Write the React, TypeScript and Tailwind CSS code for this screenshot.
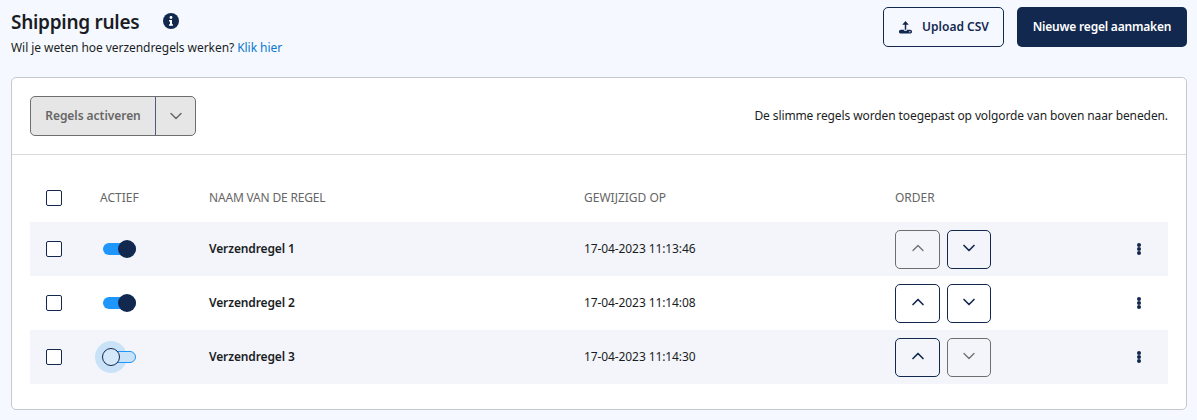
import React from 'react';
import { ChevronDown, ChevronUp } from 'lucide-react';

const rules = [
  { name: 'Verzendregel 1', date: '17-04-2023 11:13:46', active: true, up: false, down: true },
  { name: 'Verzendregel 2', date: '17-04-2023 11:14:08', active: true, up: true, down: true },
  { name: 'Verzendregel 3', date: '17-04-2023 11:14:30', active: false, up: true, down: false },
];

const gridCols = 'grid grid-cols-[70px_109px_375px_311px_1fr_auto] items-center';

function Checkbox() {
  return <span className="ml-4 block h-4 w-4 rounded-[2px] border border-[#12284f] bg-white" />;
}

function Toggle({ on }: { on: boolean }) {
  if (on) {
    return (
      <div className="relative ml-[3px] h-3 w-[33px] rounded-full bg-[#1e96fc]">
        <span className="absolute -top-[3px] right-0 h-[18px] w-[18px] rounded-full bg-[#12284f]" />
      </div>
    );
  }
  return (
    <div className="relative ml-[3px] h-3 w-[33px]">
      <span className="absolute -left-2 -top-[10px] h-8 w-8 rounded-full bg-[#c9e2f8]" />
      <div className="absolute inset-0 rounded-full border border-[#1e96fc] bg-[#c9e2f8]" />
      <span className="absolute -left-px -top-[3px] h-[18px] w-[18px] rounded-full border border-[#12284f] bg-[#d4e8fa]" />
    </div>
  );
}

function OrderButton({ dir, enabled }: { dir: 'up' | 'down'; enabled: boolean }) {
  const Icon = dir === 'up' ? ChevronUp : ChevronDown;
  return (
    <button
      className={`flex h-[39px] items-center justify-center rounded-[5px] border pb-0.5 ${dir === 'up' ? 'w-[45px]' : 'w-[44px]'} ${
        enabled ? 'border-[#12284f] text-[#12284f]' : 'border-[#6e6e6e] text-[#6e6e6e]'
      }`}
    >
      <Icon className="h-5 w-5" strokeWidth={enabled ? 2 : 1.5} />
    </button>
  );
}

function Kebab() {
  return (
    <div className="mr-[27px] flex w-1 flex-col items-center gap-[0.5px]">
      <span className="h-[3.500px] w-[3.500px] rounded-full bg-[#12284f]" />
      <span className="h-[3.500px] w-[3.500px] rounded-full bg-[#12284f]" />
      <span className="h-[3.500px] w-[3.500px] rounded-full bg-[#12284f]" />
    </div>
  );
}

export default function App() {
  return (
    <div className="h-[420px] overflow-hidden bg-[#f5f9ff] pl-[11px] pr-[10px] font-['Noto_Sans',sans-serif] text-[#1a1d24]">
      <header className="flex h-[77px] items-start justify-between">
        <div className="pt-[7px]">
          <div className="flex items-center">
            <h1 className="text-[19px] font-semibold leading-[30px] tracking-[-0.28px]">Shipping rules</h1>
            <svg viewBox="0 0 16 16" className="mb-0.5 ml-6 h-4 w-4">
              <circle cx="8" cy="8" r="8" fill="#12284f" />
              <circle cx="8" cy="4.500" r="1.400" fill="#fff" />
              <path d="M6 7h3v4.300h1v1.400H6v-1.400h1V8.400H6z" fill="#fff" />
            </svg>
          </div>
          <p className="mt-[3px] text-[12px] leading-4 tracking-[-0.06px]">
            Wil je weten hoe verzendregels werken? <a className="text-[#0a78d2]">Klik hier</a>
          </p>
        </div>
        <div className="flex gap-[13px] pt-[7px]">
          <button className="flex h-10 w-[121px] items-center justify-center gap-[9px] rounded-[5px] border border-[#12284f] text-[12px] font-semibold text-[#12284f]">
            <svg viewBox="0 0 16 16" className="h-[15px] w-[15px]" fill="#12284f">
              <path d="M8 1 4.500 5h2.700v5.500h1.600V5h2.700z" />
              <path
                fillRule="evenodd"
                d="M1 12.500c0-1.100.9-2 2-2h3.500v1h3v-1H13c1.100 0 2 .9 2 2s-.9 2-2 2H3c-1.100 0-2-.9-2-2zm11 0a.7.7 0 1 0 1.400 0 .7.7 0 1 0-1.400 0z"
              />
            </svg>
            Upload CSV
          </button>
          <button className="h-10 w-[170px] rounded-[5px] bg-[#12284f] text-[12px] font-semibold tracking-[-0.2px] text-white">
            Nieuwe regel aanmaken
          </button>
        </div>
      </header>

      <section className="h-[333px] rounded-[5px] border border-[#c4c8cf] bg-white">
        <div className="flex h-[77px] items-center justify-between border-b border-[#d9d9d9] px-[18px]">
          <div className="flex h-10 w-[166px] rounded-[5px] border border-[#6e6e6e] bg-[#e6e6e6] text-[#666]">
            <span className="flex w-[125px] items-center justify-center border-r border-[#4f5b78] text-[12px] font-semibold tracking-[-0.05px]">
              Regels activeren
            </span>
            <span className="flex flex-1 items-center justify-center">
              <ChevronDown className="h-5 w-5" strokeWidth={1.75} />
            </span>
          </div>
          <p className="text-[12px] tracking-[-0.1px]">De slimme regels worden toegepast op volgorde van boven naar beneden.</p>
        </div>

        <div className="px-[18px]">
          <div className={`${gridCols} h-[67px] pt-[19px] text-[12px] text-[#666]`}>
            <Checkbox />
            <span>ACTIEF</span>
            <span className="tracking-[-0.18px]">NAAM VAN DE REGEL</span>
            <span>GEWIJZIGD OP</span>
            <span>ORDER</span>
            <span />
          </div>
          {rules.map((rule, idx) => (
            <div key={rule.name} className={`${gridCols} h-[54px] ${idx % 2 === 0 ? 'bg-[#f3f5fa]' : 'bg-white'}`}>
              <Checkbox />
              <Toggle on={rule.active} />
              <span className="text-[12px] font-semibold tracking-[-0.12px]">{rule.name}</span>
              <span className="text-[12px] tracking-[-0.1px]">{rule.date}</span>
              <div className="flex gap-[7px]">
                <OrderButton dir="up" enabled={rule.up} />
                <OrderButton dir="down" enabled={rule.down} />
              </div>
              <Kebab />
            </div>
          ))}
        </div>
      </section>
    </div>
  );
}
